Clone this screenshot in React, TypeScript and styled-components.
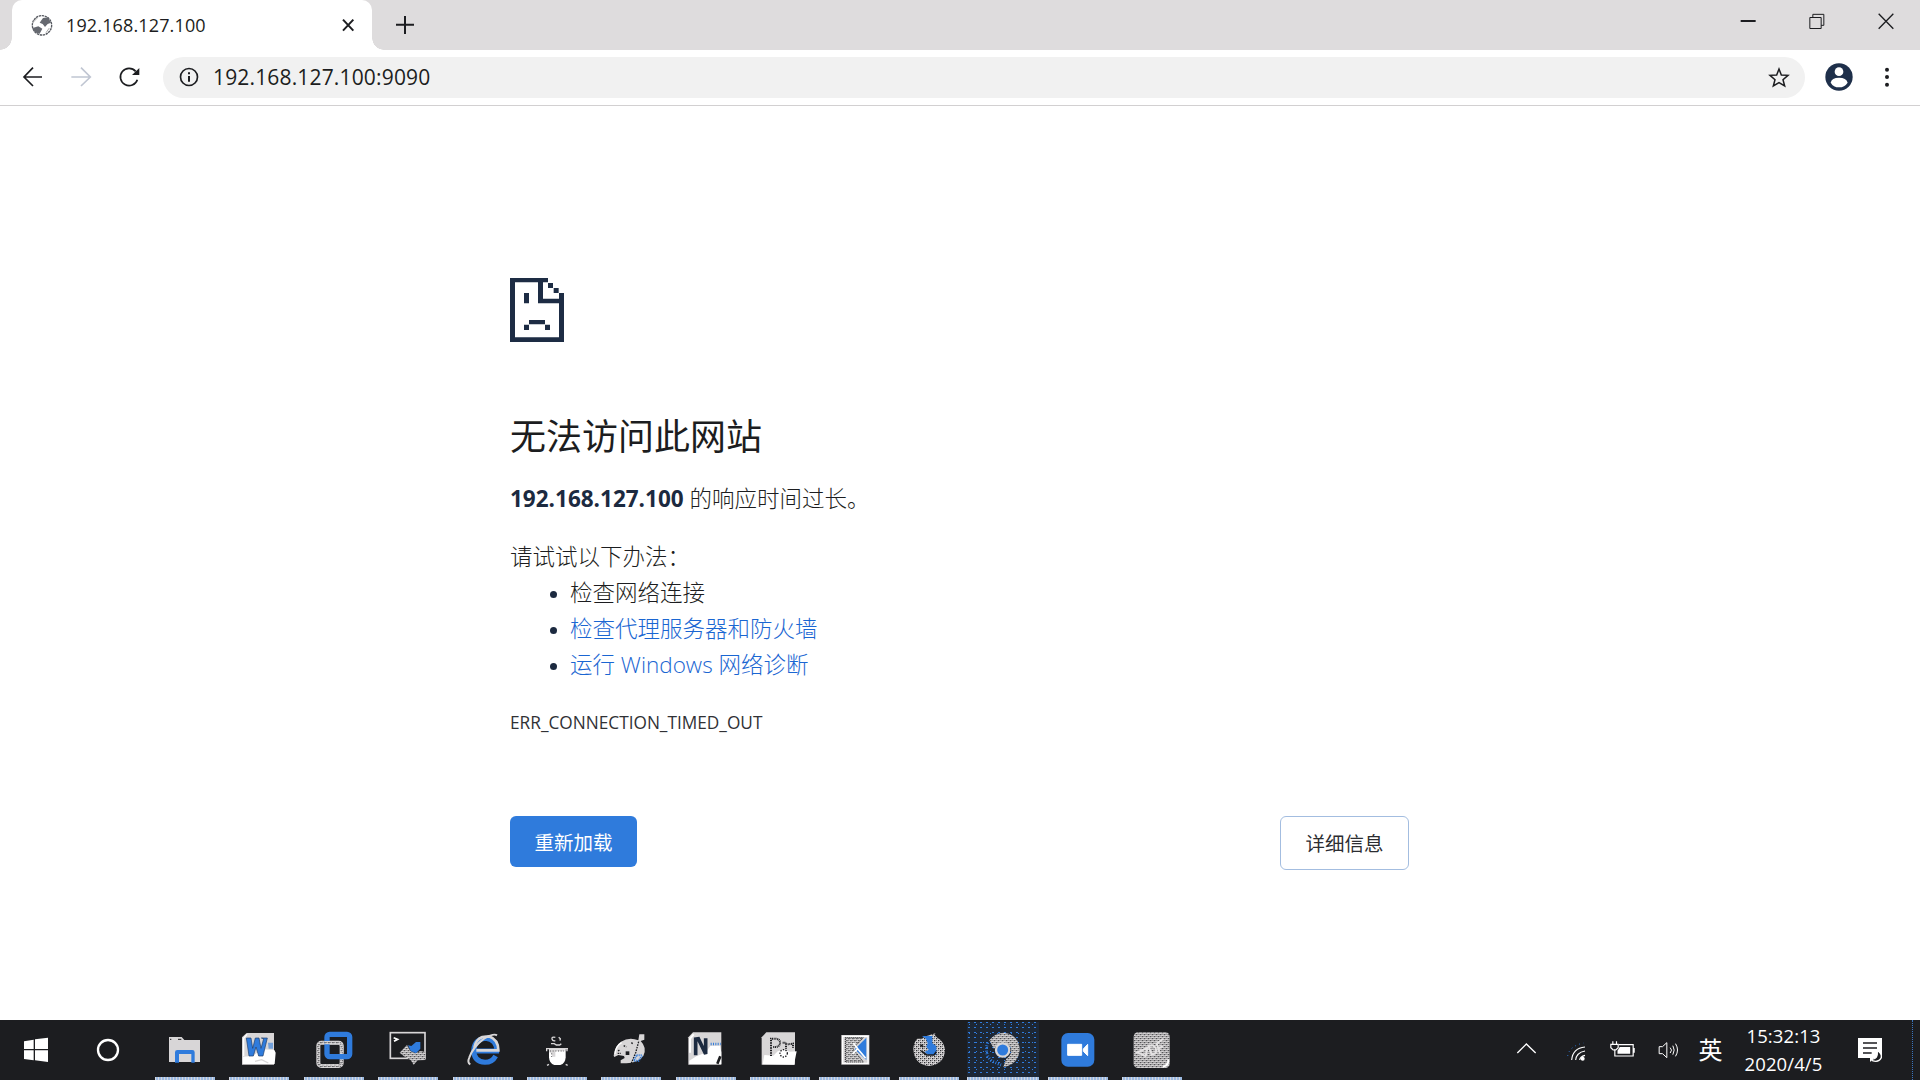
import React from "react";
import styled, { createGlobalStyle } from "styled-components";

const ink = "#1c1d20";
const grey = "#d8d6d7";
const blue = "#2f7bdc";
const latin = `"Open Sans", "Noto Sans CJK SC", sans-serif`;

const Global = createGlobalStyle`
  body { margin: 0; background: #fff; overflow: hidden; }
  * { box-sizing: border-box; }
`;

const Screen = styled.div`
  display: flex;
  flex-direction: column;
  width: 1920px;
  height: 1080px;
  background: #fff;
  color: ${ink};
  font-family: ${latin};
`;

const Glyph = styled.svg`
  display: block;
  flex: none;
  width: 40px;
  height: 40px;
  overflow: visible;
`;

/* ---------- browser chrome ---------- */
const TabStrip = styled.header`
  display: flex;
  height: 50px;
  padding-left: 12px;
  background-color: #dedcdd;
`;

const Tab = styled.div`
  position: relative;
  display: flex;
  align-items: center;
  width: 360px;
  height: 50px;
  padding: 0 4px 0 10px;
  border-radius: 10px 10px 0 0;
  background: #fff;
  &::before,
  &::after {
    content: "";
    position: absolute;
    bottom: 0;
    width: 12px;
    height: 12px;
  }
  &::before {
    left: -12px;
    background: radial-gradient(circle at 0 0, transparent 11.5px, #fff 12px);
  }
  &::after {
    right: -12px;
    background: radial-gradient(circle at 100% 0, transparent 11.5px, #fff 12px);
  }
`;

const TabTitle = styled.span`
  flex: 1;
  margin-left: 4px;
  font-size: 18px;
  line-height: 50px;
  letter-spacing: 0.14px;
`;

const NewTab = styled.div`
  display: flex;
  align-items: center;
  margin-left: 13px;
`;

const WindowButtons = styled.div`
  display: flex;
  margin-left: auto;
  height: 42px;
  align-items: center;
`;

const WindowButton = styled.div`
  display: flex;
  justify-content: center;
  width: 69px;
`;

const Toolbar = styled.nav`
  display: flex;
  align-items: center;
  height: 56px;
  padding: 0 9px 1px;
  border-bottom: 1px solid #d2d0d1;
  background: #fff;
`;

const ToolButton = styled.div`
  display: flex;
  justify-content: center;
  width: 48px;
`;

const Omnibox = styled.div`
  display: flex;
  align-items: center;
  width: 1642px;
  height: 41px;
  margin: 0 10px;
  padding: 0 6px;
  border-radius: 21px;
  background: #f1f1f1;
`;

const Address = styled.span`
  flex: 1;
  margin-left: 4px;
  font-size: 21px;
  line-height: 41px;
  letter-spacing: 0.16px;
`;

/* ---------- error page ---------- */
const Page = styled.main`
  flex: 1;
  display: flex;
  flex-direction: column;
  width: 899px;
  margin-left: 510px;
  padding-top: 172px;
`;

const SadPage = styled.svg`
  display: block;
  width: 54px;
  height: 64px;
`;

const Title = styled.h1`
  margin: 68px 0 0;
  font-size: 36px;
  font-weight: 400;
  line-height: 54px;
`;

const Line = styled.p<{ $top?: number }>`
  margin: ${(p) => p.$top ?? 0}px 0 0;
  font-size: 22.5px;
  line-height: 36px;
  height: 36px;
  font-weight: 300;
  strong {
    font-weight: 700;
    color: #1c2a40;
  }
`;

const Tips = styled.ul`
  margin: 0;
  padding-left: 60px;
  font-size: 22.5px;
  font-weight: 300;
  line-height: 36px;
  li {
    height: 36px;
  }
  li::marker {
    font-size: 19px;
    color: #1c2a40;
  }
`;

const Link = styled.a`
  color: #1a66d2;
`;

const Code = styled.div`
  margin-top: 25px;
  font-size: 17.25px;
  line-height: 30px;
  color: #303135;
`;

const Actions = styled.div`
  display: flex;
  justify-content: space-between;
  align-items: flex-start;
  margin-top: 78px;
`;

const Button = styled.button<{ $primary?: boolean }>`
  width: ${(p) => (p.$primary ? 127 : 129)}px;
  height: ${(p) => (p.$primary ? 51 : 54)}px;
  padding: 0 0 1px;
  border: ${(p) => (p.$primary ? "0" : "1.5px solid #a3bde0")};
  border-radius: 6px;
  background: ${(p) => (p.$primary ? blue : "#fff")};
  color: ${(p) => (p.$primary ? "#fff" : "#2c2d31")};
  font-family: "Noto Sans CJK SC", sans-serif;
  font-size: 19.5px;
`;

/* ---------- taskbar ---------- */
const Taskbar = styled.footer`
  display: flex;
  height: 60px;
  background: ${ink};
  color: #fff;
`;

const SystemButton = styled.div`
  display: flex;
  justify-content: center;
  padding-top: 9px;
  width: 72px;
`;

const Apps = styled.div`
  display: flex;
  margin-left: 3.8px;
`;

const AppButton = styled.div<{ $bar: number; $active?: boolean }>`
  display: flex;
  flex-direction: column;
  align-items: center;
  justify-content: space-between;
  width: 74.4px;
  padding-top: 9px;
  &::after {
    content: "";
    width: ${(p) => p.$bar}px;
    height: 3px;
    background: repeating-linear-gradient(90deg, #d4d7e0 0 1px, #9dbbe2 1px 3px);
  }
  ${(p) =>
    p.$active &&
    `background-color: #1d2735;
     background-image: radial-gradient(circle, #2f7bdc 0.7px, transparent 1px),
       radial-gradient(circle, #2f7bdc 0.7px, transparent 1px);
     background-size: 6px 5px, 7px 9px;
     background-clip: content-box;
     padding: 2px 1px 0;
     & > svg { margin-top: 7px; }`}
`;

const Tray = styled.div`
  display: flex;
  margin-left: auto;
`;

const TrayItem = styled.div<{ $w: number }>`
  display: flex;
  justify-content: center;
  width: ${(p) => p.$w}px;
  padding-top: 9px;
`;

const Ime = styled.span`
  font-family: "Noto Sans CJK SC", sans-serif;
  font-size: 24px;
  line-height: 40px;
`;

const Clock = styled.div`
  display: flex;
  flex-direction: column;
  align-items: center;
  width: 105px;
  padding-top: 2px;
  font-size: 18.5px;
  line-height: 27.5px;
  letter-spacing: 0.1px;
`;

const ShowDesktop = styled.div`
  width: 8px;
  border-left: 1px dotted #3a75bf;
`;

const Defs = styled.svg`
  position: absolute;
  width: 0;
  height: 0;
`;

const Icon = ({ x, y = 57, children }: { x: number; y?: number; children: React.ReactNode }) => (
  <Glyph viewBox={`${x} ${y} 120 120`} fill="none">{children}</Glyph>
);

const mesh = "url(#mesh)";

const apps: { name: string; x: number; bar: number; active?: boolean; art: React.ReactNode }[] = [
  { name: "explorer", x: 495, bar: 60, art: <>
    <path d="M507 81h38l8 9h47v66h-93z" fill={grey} />
    <path d="M510 88h4M534 88h10" stroke={ink} strokeWidth="3" />
    <path d="M525 158v-31q0-7 7-7h45q7 0 7 7v31h-10v-26h-37v26z" fill={blue} />
  </> },
  { name: "word", x: 717, bar: 60, art: <>
    <path d="M726 82l14-13h82v95h-96z" fill={grey} />
    <path d="M729 162v-22l28-2 30-20 36 2 4 8-3 34z" fill="#fff" />
    <path d="M731 138V85l10-12" stroke="#fff" strokeWidth="4" />
    <path d="M739 84h14l5 31 8-31h11l6 31 8-29-7-2h18l-13 54h-13l-8-27-8 27h-13z" fill={blue} stroke="#1d3b68" strokeWidth="2" />
    <path d="M804 98h15v18h-13z" fill={blue} opacity=".6" />
    <path d="M765 154l20-5 20 10" stroke={grey} strokeWidth="4" />
  </> },
  { name: "vmware", x: 41, bar: 60, art: <>
    <rect x="54" y="98" width="70" height="70" rx="9" stroke={grey} strokeWidth="12" />
    <rect x="54" y="98" width="70" height="70" rx="9" stroke={mesh} strokeWidth="8" />
    <rect x="80" y="73" width="68" height="67" rx="8" stroke={blue} strokeWidth="16" />
    <path d="M72 98H113q11 0 11 11v20" stroke={grey} strokeWidth="10" />
    <path d="M72 98H113q11 0 11 11v20" stroke={mesh} strokeWidth="6" />
  </> },
  { name: "terminal", x: 265, bar: 60, art: <>
    <rect x="272" y="68" width="104" height="77" stroke={grey} strokeWidth="5" />
    <path d="M282 83l12 5-11 6" stroke="#fff" strokeWidth="5" />
    <path d="M300 128l22-23 10 18 15 7 15-7 15 3v24l-23 1-12 13-9-14-20-11z" fill={grey} />
    <path d="M300 128l22-23 10 18 15 7 15-7 15 3v24l-23 1-12 13-9-14-20-11z" fill={mesh} />
    <path d="M325 106l10 2 14-12h13v20l-13 14-16-7z" fill={blue} />
  </> },
  { name: "explorer-web", x: 488, bar: 60, art: <>
    <path d="M586 138q-10 19-32 19-33-2-34-36 3-34 36-36 34 3 33 38h-64" stroke={blue} strokeWidth="15" />
    <path d="M528 121h66q0-32-28-42l-20 2q-20 8-24 32" stroke={grey} strokeWidth="8" />
    <path d="M536 113q2-17 20-18 18 1 20 18z" fill={ink} />
    <path d="M510 163q-10-5-3-21 12-32 44-56 29-17 39-10" stroke={grey} strokeWidth="6" />
  </> },
  { name: "java", x: 711, bar: 60, art: <>
    <path d="M766 82q-12-2-10 5t10 5M776 82l5 4-1 6M753 101h10l6 4h10l5-4" stroke={grey} strokeWidth="4" />
    <path d="M747 116h50v26q-1 19-16 23h-18q-15-4-16-23z" fill="#fff" />
    <path d="M738 116h66M740 116v8M801 116v8M747 163l-6 3M797 163l6 3" stroke={grey} strokeWidth="4" />
    <path d="M748 118h46v6h-28v16h-8l-5-11-6-2z" fill={grey} />
    <path d="M750 123h42M755 130v12" stroke={ink} strokeWidth="2" strokeDasharray="3 5" />
  </> },
  { name: "paint", x: 34, bar: 60, art: <>
    <path d="M42 137q3-29 22-42 25-15 52-4l3-18h15v16l-11 4q20 20 8 45-16 21-51 22H63v-9l12-7-2-6-17-3-12 6z" fill={grey} />
    <path d="M78 124h11v11H78z" fill={ink} />
    <path d="M55 123l6-4M72 107l8 4M95 98l6 4M54 130h10M117 95l-9 33-13 32" stroke={ink} strokeWidth="4" strokeDasharray="5 3" />
    <path d="M111 136h17l-11 16h-15z" stroke={blue} strokeWidth="6" strokeDasharray="3 3" />
    <path d="M46 132q2-24 20-34" stroke="#fff" strokeWidth="4" />
  </> },
  { name: "onenote", x: 257, bar: 60, art: <>
    <path d="M264 82l14-15h85v97h-99z" fill={grey} />
    <path d="M267 162v-10l21-13 27-11 15-20 29-1 4 20v35z" fill="#fff" />
    <path d="M269 128V86l11-13" stroke="#fff" strokeWidth="6" />
    <path d="M286 136V87l8-1 22 46V85" stroke="#1c2a40" strokeWidth="11" />
    <path d="M331 102h30" stroke={blue} strokeWidth="7" strokeDasharray="3 4" />
    <path d="M360 139l-9 22" stroke={ink} strokeWidth="8" />
  </> },
  { name: "project", x: 481, bar: 60, art: <>
    <path d="M486 82l14-15h86v97h-100z" fill={grey} />
    <path d="M489 163l5-28 27 2 13-13 16-5 21 6 20-1-8 40z" fill="#fff" />
    <path d="M514 138V86h15q13 2 12 13t-13 12h-9M549 98h10v18M564 103l16-2v13" stroke={ink} strokeWidth="6" strokeDasharray="3 2" />
    <circle cx="552" cy="130" r="11" stroke={ink} strokeWidth="4" strokeDasharray="4 4" />
  </> },
  { name: "xshell", x: 704, bar: 71, art: <>
    <rect x="723" y="75" width="84" height="89" fill={grey} />
    <rect x="727" y="79" width="76" height="81" stroke="#fff" strokeWidth="4" />
    <path d="M735 83h54l-31 33 31 40h-54z" fill={mesh} stroke={ink} strokeWidth="3" strokeDasharray="3 3" />
    <path d="M798 83v67l-35-32z" fill={blue} />
    <path d="M759 99l13 17-15 16M772 116l24 29" stroke="#fff" strokeWidth="5" />
  </> },
  { name: "firefox", x: 27, bar: 60, art: <>
    <path d="M40 117q1-20 12-31h13l13-7 28-9q-4 7 6 13 19 10 23 34-1 46-47 51-45-3-48-51z" fill={grey} />
    <path d="M40 117q1-20 12-31h13l13-7 28-9q-4 7 6 13 19 10 23 34-1 46-47 51-45-3-48-51z" fill={mesh} />
    <path d="M66 78h31v22l12 8v27H85l-11-9 12-7-7-8 4-11-5-14z" fill={blue} />
    <path d="M61 104l9 7M64 123l16 12h22l7-10" stroke={ink} strokeWidth="5" />
  </> },
  { name: "chrome", x: 250, bar: 72, active: true, art: <>
    <path d="M269 91q15-21 43-23 47 6 48 53-5 43-49 50l9-25q20-13 13-34-15-20-39-8l-11 12z" fill={grey} />
    <path d="M269 91q15-21 43-23 47 6 48 53-5 43-49 50l9-25q20-13 13-34-15-20-39-8l-11 12z" fill={mesh} />
    <path d="M264 98q-11 35 12 55l28 12" stroke={blue} strokeWidth="9" strokeDasharray="3 5" />
    <circle cx="309" cy="120" r="20" fill={blue} stroke={grey} strokeWidth="7" />
  </> },
  { name: "meeting", x: 473, bar: 60, art: <>
    <rect x="483" y="69" width="99" height="101" rx="20" fill={blue} />
    <path d="M502 103h42v33h-42zM549 117l13-14v34l-13-13z" fill="#fff" stroke="#fff" strokeWidth="3" />
  </> },
  { name: "pdf", x: 697, bar: 60, art: <>
    <rect x="702" y="67" width="108" height="107" rx="13" fill={grey} />
    <rect x="702" y="67" width="108" height="107" rx="13" fill={mesh} />
    <path d="M713 127l30-13-5 24zM747 108l9 26q20-4 11-21-7-11-20-5zM781 132l-10-32 20-13M777 115l12-7" stroke="#e4e2e3" strokeWidth="6" />
    <path d="M790 170q18-4 16-22" stroke="#fff" strokeWidth="6" />
  </> },
];

export default function App() {
  return (
    <Screen>
      <Global />
      <Defs>
        <pattern id="mesh" width="12" height="12" patternUnits="userSpaceOnUse">
          <path d="M0 0h4v4H0zM6 6h4v4H6zM6 0h2v2H6zM0 6h2v2H0z" fill={ink} opacity=".9" />
        </pattern>
      </Defs>

      <TabStrip>
        <Tab>
          <Icon x={66} y={15}>
            <circle cx="126" cy="76" r="29" stroke="#55585f" strokeWidth="4" strokeDasharray="7 2" />
            <path d="M98 84l17-5 12 7-8 15-15-4zM119 68l10-14 15-2 9 16-10 4-8 9-7-9z" fill="#666970" />
            <path d="M100 66l12-12M138 98l10-14" stroke="#aaa" strokeWidth="3" />
          </Icon>
          <TabTitle>192.168.127.100</TabTitle>
          <Icon x={984} y={15}>
            <path d="M1029 59l31 33M1060 59l-31 33" stroke={ink} strokeWidth="6" />
          </Icon>
        </Tab>
        <NewTab>
          <Icon x={1155} y={15}>
            <path d="M1188 74h54M1215 48v54" stroke={ink} strokeWidth="6" />
          </Icon>
        </NewTab>
        <WindowButtons>
          <WindowButton><Icon x={145} y={3}><path d="M183 63h45" stroke={ink} strokeWidth="6" /></Icon></WindowButton>
          <WindowButton><Icon x={350} y={3}><path d="M388.5 52.5h34v33h-34zM397.5 52v-9h33v33h-8" stroke={ink} strokeWidth="3" /></Icon></WindowButton>
          <WindowButton><Icon x={557} y={3}><path d="M595 41l44 45M639 41l-44 45" stroke={ink} strokeWidth="4" /></Icon></WindowButton>
        </WindowButtons>
      </TabStrip>

      <Toolbar>
        <ToolButton><Icon x={40} y={172}><path d="M127 232H75M100 204l-27 28 27 27" stroke={ink} strokeWidth="5" /></Icon></ToolButton>
        <ToolButton><Icon x={183} y={172}><path d="M214 232h55M243 204l28 28-28 27" stroke="#c0c6d2" strokeWidth="5" /></Icon></ToolButton>
        <ToolButton><Icon x={327} y={172}>
          <path d="M407 215a26 26 0 1 0 5 25" stroke={ink} strokeWidth="5" />
          <path d="M418 205v21h-22z" fill={ink} />
        </Icon></ToolButton>
        <Omnibox>
          <Icon x={507} y={172}>
            <circle cx="567" cy="232" r="25.5" stroke={ink} strokeWidth="5" />
            <path d="M567 229v17M567 218v6" stroke={ink} strokeWidth="6" />
          </Icon>
          <Address>192.168.127.100:9090</Address>
          <Icon x={237} y={172}>
            <path d="M297 208l7 18 20 1-15 13 5 19-17-10-17 10 5-19-15-13 20-1z" stroke={ink} strokeWidth="4.5" />
          </Icon>
        </Omnibox>
        <ToolButton><Icon x={417} y={172}>
          <circle cx="477" cy="232" r="41" fill="#1e2f4a" />
          <circle cx="477" cy="216" r="13" fill="#fff" />
          <path d="M452 249q3-15 25-15t26 15q-9 14-26 14t-25-14z" fill="#fff" />
        </Icon></ToolButton>
        <ToolButton><Icon x={561} y={172}>
          <g fill={ink}><circle cx="621" cy="210" r="6" /><circle cx="621" cy="232" r="6" /><circle cx="621" cy="255" r="6" /></g>
        </Icon></ToolButton>
      </Toolbar>

      <Page>
        <SadPage viewBox="60 54 162 192">
          <path fill="#1d2c44" fillRule="evenodd" d="M60 54h114v13h-15v49h48V99h15v147H60zM75 67v165h132V130h-63V67zM174 69h15v15h-15zM191 84h15v15h-15zM102 99h15v31h-15zM117 180h48v13h-48zM102 194h15v16h-15zM165 194h15v16h-15z" />
        </SadPage>
        <Title>无法访问此网站</Title>
        <Line $top={17}><strong>192.168.127.100</strong> 的响应时间过长。</Line>
        <Line $top={22}>请试试以下办法：</Line>
        <Tips>
          <li>检查网络连接</li>
          <li><Link>检查代理服务器和防火墙</Link></li>
          <li><Link>运行 Windows 网络诊断</Link></li>
        </Tips>
        <Code>ERR_CONNECTION_TIMED_OUT</Code>
        <Actions>
          <Button $primary>重新加载</Button>
          <Button>详细信息</Button>
        </Actions>
      </Page>

      <Taskbar>
        <SystemButton><Icon x={48}>
          <path d="M72 94l29-5v28H72zM105 88l39-5v34h-39zM72 121h29v30l-29-4zM105 121h39v35l-39-5z" fill="#fff" />
        </Icon></SystemButton>
        <SystemButton><Icon x={264}><circle cx="324" cy="120" r="30" stroke="#fff" strokeWidth="7" /></Icon></SystemButton>
        <Apps>
          {apps.map((a) => (
            <AppButton key={a.name} $bar={a.bar} $active={a.active}>
              <Icon x={a.x}>{a.art}</Icon>
            </AppButton>
          ))}
        </Apps>
        <Tray>
          <TrayItem $w={48}><Icon x={78}><path d="M112 129l27-27 28 27" stroke="#fff" strokeWidth="4" /></Icon></TrayItem>
          <TrayItem $w={50}><Icon x={225}>
            <path d="M275 150q3-35 40-39M287 150q2-22 28-27M299 150q1-10 16-14" stroke="#fff" strokeWidth="3.5" />
            <circle cx="308" cy="146" r="6" fill="#fff" />
            <path d="M263 138q5-30 48-39" stroke={blue} strokeWidth="3" strokeDasharray="3 10" />
          </Icon></TrayItem>
          <TrayItem $w={45}><Icon x={367.5}>
            <path d="M415 104h43v34h-55v-20M461 114v14M397 94v9M408 94v9" stroke="#fff" strokeWidth="3.5" />
            <path d="M391 103h22v10l-7 7h-8l-7-7z" stroke="#fff" strokeWidth="3.5" />
            <path d="M418 111h31v20h-38v-9z" fill="#fff" />
          </Icon></TrayItem>
          <TrayItem $w={45}><Icon x={502.5}>
            <path d="M536 110h10l13-12v45l-13-12h-10zM569 113q8 7 0 16M577 107q8 13 0 27M585 101q12 19 0 38" stroke="#fff" strokeWidth="3" />
          </Icon></TrayItem>
          <TrayItem $w={41}><Ime>英</Ime></TrayItem>
          <Clock><span>15:32:13</span><span>2020/4/5</span></Clock>
          <TrayItem $w={68}><Icon x={1110}>
            <path d="M1134 84h72v60h-23l-13 12v-12h-36z" fill="#fff" />
            <path d="M1149 99h42M1149 114h42M1149 129h26" stroke={ink} strokeWidth="4" />
            <path d="M1192 122q14 7 12 21-8 16-27 9l-1-5q18 2 16-25z" fill={ink} stroke="#fff" strokeWidth="4" />
          </Icon></TrayItem>
          <TrayItem $w={8} />
          <ShowDesktop />
        </Tray>
      </Taskbar>
    </Screen>
  );
}
